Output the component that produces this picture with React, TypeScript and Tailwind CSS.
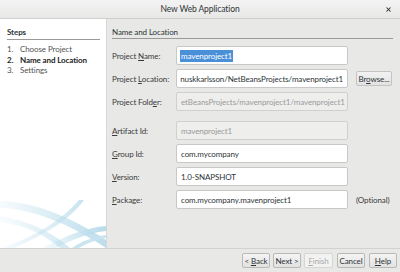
import { X } from 'lucide-react';

interface Row {
  label: string;
  mn: number; // index of mnemonic letter, -1 for none
  value: string;
  disabled?: boolean;
  selected?: boolean;
  scrolled?: boolean;
  extra?: 'browse' | 'optional';
  gapTop?: string;
}

const ROWS: Row[] = [
  { label: 'Project Name:', mn: 8, value: 'mavenproject1', selected: true },
  { label: 'Project Location:', mn: 8, value: 'nuskkarlsson/NetBeansProjects/mavenproject1', extra: 'browse', scrolled: true },
  { label: 'Project Folder:', mn: 12, value: 'etBeansProjects/mavenproject1/mavenproject1', disabled: true },
  { label: 'Artifact Id:', mn: 0, value: 'mavenproject1', disabled: true, gapTop: 'mt-[6px]' },
  { label: 'Group Id:', mn: 0, value: 'com.mycompany' },
  { label: 'Version:', mn: 0, value: '1.0-SNAPSHOT' },
  { label: 'Package:', mn: 0, value: 'com.mycompany.mavenproject1', extra: 'optional' },
];

function Mnemonic({ text, i }: { text: string; i: number }) {
  if (i < 0) return <>{text}</>;
  return (
    <>
      {text.slice(0, i)}
      <span className="underline underline-offset-1">{text[i]}</span>
      {text.slice(i + 1)}
    </>
  );
}

function Swoosh() {
  return (
    <svg width="106" height="50" viewBox="0 0 106 50" className="block">
      <defs>
        <linearGradient id="sw" x1="0" y1="0" x2="1" y2="0">
          <stop offset="0" stopColor="#f4fafd" />
          <stop offset="1" stopColor="#a6d2e5" />
        </linearGradient>
      </defs>
      <path d="M0 3 C30 3 70 18 106 42 L106 50 C70 26 30 10 0 10 Z" fill="url(#sw)" opacity="0.75" />
      <path d="M14 50 C42 38 70 22 84 2 L79 2 C62 22 36 38 2 50 Z" fill="url(#sw)" opacity="0.6" />
      <path d="M42 50 C62 40 82 30 106 28 L106 33 C86 35 68 44 56 50 Z" fill="url(#sw)" opacity="0.8" />
      <path d="M72 50 C82 43 93 39 106 37 L106 40 C95 42 86 46 79 50 Z" fill="#c4e2ee" opacity="0.9" />
      <path d="M0 18 C25 22 50 32 70 50 L60 50 C45 37 25 27 0 24 Z" fill="url(#sw)" opacity="0.5" />
    </svg>
  );
}

function Btn({ children, disabled, w }: { children: React.ReactNode; disabled?: boolean; w: string }) {
  return (
    <button
      className={`${w} h-[15px] rounded-[2px] border text-[8px] leading-none flex items-center justify-center ${
        disabled ? 'border-[#d6d6d6] bg-[#f2f2f2] text-[#a8a8a8]' : 'border-[#b9b9b9] bg-gradient-to-b from-[#f4f4f4] to-[#e2e2e2] text-[#2e3436]'
      }`}
    >
      {children}
    </button>
  );
}

export default function App() {
  return (
    <div className="w-[400px] h-[272px] flex flex-col bg-[#e8e8e7] text-[#2e3436] overflow-hidden tracking-[-0.1px]" style={{ fontFamily: 'Lato, "Open Sans", sans-serif' }}>
      {/* title bar */}
      <div className="h-[19px] flex items-center relative bg-gradient-to-b from-[#f3f3f3] to-[#e8e8e7] border-b border-[#cfcfcd]">
        <span className="flex-1 text-center text-[8.5px]">New Web Application</span>
        <X className="absolute right-[8px] top-[6px] w-[7px] h-[7px]" strokeWidth={3.5} />
      </div>

      <div className="flex flex-1 min-h-0 border-b border-[#d2d2d0]">
        {/* steps panel */}
        <div className="w-[107px] bg-white border-r border-[#d8d8d8] flex flex-col">
          <div className="px-[7px] pt-[7px] flex-1">
            <div className="text-[8px] leading-[12px] font-bold pb-[1px] border-b border-[#9a9a9a] w-[93px]">Steps</div>
            <ol className="mt-[4px] text-[8px] leading-[10.5px]">
              <li className="text-[#555]"><span className="inline-block w-[13px]">1.</span>Choose Project</li>
              <li className="font-bold text-[#222]"><span className="inline-block w-[13px]">2.</span>Name and Location</li>
              <li className="text-[#555]"><span className="inline-block w-[13px]">3.</span>Settings</li>
            </ol>
          </div>
          <Swoosh />
        </div>

        {/* form panel */}
        <div className="flex-1 pl-[5px] pr-[7px] pt-[7px]">
          <div className="text-[8px] leading-[12px] border-b border-[#9a9a9a]">Name and Location</div>
          <div className="mt-[7px] flex flex-col gap-[4px]">
            {ROWS.map(r => (
              <div key={r.label} className={`flex items-center h-[19px] ${r.gapTop ?? ''}`}>
                <span className="w-[64px] text-[8px] text-[#3a3a3a] whitespace-nowrap">
                  <Mnemonic text={r.label} i={r.mn} />
                </span>
                <div
                  className={`w-[172px] h-[19px] rounded-[2px] border flex items-center px-[4px] overflow-hidden whitespace-nowrap text-[8px] ${
                    r.scrolled ? 'justify-end' : ''
                  } ${r.disabled ? 'bg-[#eeeeed] border-[#d0d0d0] text-[#9a9a9a]' : 'bg-white border-[#c8c8c8] text-[#2e3436]'}`}
                >
                  {r.selected ? <span className="bg-[#4a90d9] text-white px-[1px] -ml-[1px]">{r.value}</span> : <span className="shrink-0">{r.value}</span>}
                </div>
                {r.extra === 'browse' && (
                  <button className="ml-[8px] w-[36px] h-[15px] rounded-[2px] border border-[#c4c4c4] bg-gradient-to-b from-[#f2f2f2] to-[#e2e2e2] text-[8px] leading-none">
                    Br<span className="underline">o</span>wse...
                  </button>
                )}
                {r.extra === 'optional' && <span className="ml-[8px] text-[8px] text-[#3a3a3a]">(Optional)</span>}
              </div>
            ))}
          </div>
        </div>
      </div>

      {/* button bar */}
      <div className="h-[23px] flex items-center justify-end gap-[3px] pr-[3px]">
        <Btn w="w-[28px]">&lt;&nbsp;<span className="underline">B</span>ack</Btn>
        <Btn w="w-[28px]">Next &gt;</Btn>
        <Btn w="w-[29px]" disabled><span className="underline">F</span>inish</Btn>
        <span className="-ml-[2px]" />
        <Btn w="w-[28px]">Cancel</Btn>
        <span className="-ml-[2px]" />
        <Btn w="w-[28px]"><span className="underline">H</span>elp</Btn>
      </div>
    </div>
  );
}
